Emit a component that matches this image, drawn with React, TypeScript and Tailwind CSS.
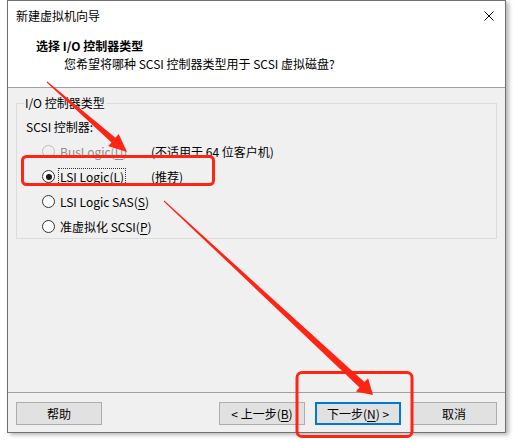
import { useState } from 'react';

type Option = {
  id: string;
  label: string;
  key: string;
  note?: string;
  disabled?: boolean;
};

const options: Option[] = [
  { id: 'buslogic', label: 'BusLogic', key: 'U', note: '(不适用于 64 位客户机)', disabled: true },
  { id: 'lsi', label: 'LSI Logic', key: 'L', note: '(推荐)' },
  { id: 'sas', label: 'LSI Logic SAS', key: 'S' },
  { id: 'pvscsi', label: '准虚拟化 SCSI', key: 'P' },
];

const Radio = ({ checked, disabled }: { checked: boolean; disabled?: boolean }) => (
  <span
    className={`flex h-[13px] w-[13px] shrink-0 items-center justify-center rounded-full border ${
      disabled ? 'border-[#bcbcbc] bg-[#f0f0f0]' : 'border-[#333333] bg-white'
    }`}
  >
    {checked && <span className="h-[6px] w-[6px] rounded-full bg-[#1a1a1a]" />}
  </span>
);

const WinButton = ({ children, primary }: { children: React.ReactNode; primary?: boolean }) => (
  <button
    className={`flex h-[23px] w-[86px] items-center justify-center whitespace-nowrap bg-[#e1e1e1] leading-none ${
      primary ? 'border-2 border-[#0078d7]' : 'border border-[#adadad]'
    }`}
  >
    {children}
  </button>
);

const App = () => {
  const [selected, setSelected] = useState('lsi');

  return (
    <div className="relative h-[440px] w-[513px] overflow-hidden bg-white font-['Noto_Sans_CJK_SC','Noto_Sans',sans-serif] text-[12px] text-black">
      <div className="ml-[7px] flex h-[433px] w-[499px] flex-col border border-[#707070] bg-[#f0f0f0] shadow-[3px_2px_4px_rgba(0,0,0,0.28)]">
        {/* title bar */}
        <div className="flex h-[29px] items-center justify-between bg-white pl-[8px] pr-[11px]">
          <span className="leading-[16px]">新建虚拟机向导</span>
          <svg width="10" height="10" viewBox="0 0 10 10">
            <path d="M0.5 0.5 L9.5 9.5 M9.5 0.5 L0.5 9.5" stroke="#000" strokeWidth="1" />
          </svg>
        </div>

        {/* header */}
        <div className="h-[58px] border-b border-[#a0a0a0] bg-white pt-[8px]">
          <div className="pl-[28px] font-bold leading-[16px]">选择 I/O 控制器类型</div>
          <div className="mt-[2px] pl-[56px] leading-[16px]">您希望将哪种 SCSI 控制器类型用于 SCSI 虚拟磁盘?</div>
        </div>

        {/* body */}
        <div className="flex-1 px-[8px] pt-[7px]">
          <fieldset className="h-[144px] border border-[#dcdcdc] pl-[9px]">
            <legend className="ml-[-2px] px-[1px] leading-[16px]">I/O 控制器类型</legend>
            <div className="mt-[3px] flex h-[25px] items-center leading-[16px]">SCSI 控制器:</div>
            {options.map((o) => (
              <div
                key={o.id}
                className={`flex h-[25px] items-center whitespace-nowrap ${o.disabled ? 'text-[#8d8d8d]' : ''}`}
                onClick={() => !o.disabled && setSelected(o.id)}
              >
                <div className="flex w-[125px] shrink-0 items-center gap-[3px] pl-[16px]">
                  <Radio checked={selected === o.id} disabled={o.disabled} />
                  <span
                    className={`px-[1px] leading-[15px] ${
                      selected === o.id ? 'border border-dotted border-[#333]' : 'border border-transparent'
                    }`}
                  >
                    {o.label}(<span className="underline underline-offset-2">{o.key}</span>)
                  </span>
                </div>
                {o.note && <span className="leading-[16px] text-black">{o.note}</span>}
              </div>
            ))}
          </fieldset>
        </div>

        {/* footer */}
        <div className="flex h-[40px] items-start border-t border-[#a0a0a0] px-[8px] pt-[9px]">
          <WinButton>帮助</WinButton>
          <div className="ml-auto flex gap-[10px]">
            <WinButton>
              &lt; 上一步(<span className="underline underline-offset-2">B</span>)
            </WinButton>
            <WinButton primary>
              下一步(<span className="underline underline-offset-2">N</span>) &gt;
            </WinButton>
            <WinButton>取消</WinButton>
          </div>
        </div>
      </div>

      {/* red markup drawn over the dialog */}
      <svg className="pointer-events-none absolute inset-0" width="513" height="440" viewBox="0 0 513 440">
        <rect x="22.5" y="156.5" width="191" height="28" rx="4" fill="none" stroke="#ff2414" strokeWidth="3" />
        <rect x="297" y="372.5" width="115" height="64" rx="5" fill="none" stroke="#ff2414" strokeWidth="3" />
        <polygon
          points="46.7,82.4 111.5,142.6 108.1,146.1 127,152 118.7,134.1 115.4,137.8 47.3,81.6"
          fill="#ff2414"
        />
        <polygon
          points="163.7,201.4 359.5,387.4 355.9,391.4 373,395 368.1,378.2 364.4,382.0 164.3,200.6"
          fill="#ff2414"
        />
      </svg>
    </div>
  );
};

export default App;
